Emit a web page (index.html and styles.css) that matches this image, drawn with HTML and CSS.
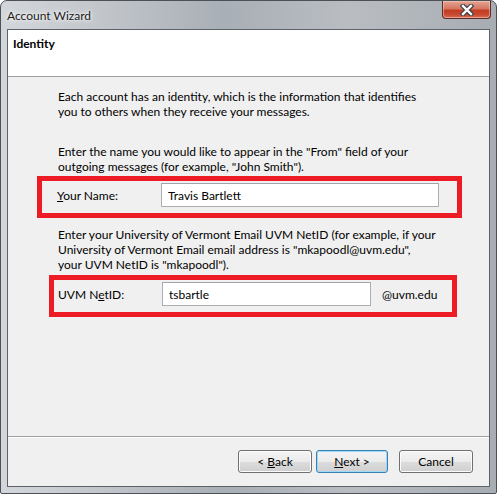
FILE: index.html
```html
<!DOCTYPE html>
<html lang="en">
<head>
    <meta charset="UTF-8">
    <title>Account Wizard</title>
    <link rel="stylesheet" href="styles.css">
</head>
<body>
    <div class="window">
        <div class="titlebar">
            <span class="title">Account Wizard</span>
            <div class="close-btn">
                <svg width="14" height="12" viewBox="0 0 14 12">
                    <path d="M3 2 L11 10 M11 2 L3 10" stroke="#3a3f48" stroke-width="4.6" stroke-linecap="square"/>
                    <path d="M3 2 L11 10 M11 2 L3 10" stroke="#ffffff" stroke-width="2.4" stroke-linecap="square"/>
                </svg>
            </div>
        </div>

        <div class="client">
            <div class="header">
                <h1>Identity</h1>
            </div>

            <div class="main">
                <p class="intro">Each account has an identity, which is the information that identifies<br>you to others when they receive your messages.</p>

                <p class="hint">Enter the name you would like to appear in the "From" field of your<br>outgoing messages (for example, "John Smith").</p>

                <div class="mark mark-name">
                    <label class="field-label"><u>Y</u>our Name:</label>
                    <input class="field-input name-input" type="text" value="Travis Bartlett">
                </div>

                <p class="hint netid-hint">Enter your University of Vermont Email UVM NetID (for example, if your<br>University of Vermont Email email address is "mkapoodl@uvm.edu",<br>your UVM NetID is "mkapoodl").</p>

                <div class="mark mark-netid">
                    <label class="field-label">UVM N<u>e</u>tID:</label>
                    <input class="field-input netid-input" type="text" value="tsbartle">
                    <span class="domain">@uvm.edu</span>
                </div>
            </div>

            <div class="footer">
                <button class="btn">&lt; <u>B</u>ack</button>
                <button class="btn btn-default"><u>N</u>ext &gt;</button>
                <button class="btn btn-cancel">Cancel</button>
            </div>
        </div>
    </div>
</body>
</html>
```

FILE: styles.css
```css
body {
    margin: 0;
    background: #ffffff;
    font-family: "Segoe UI", Lato, sans-serif;
    font-size: 12px;
    color: #000;
}

.window {
    width: 497px;
    height: 494px;
    box-sizing: border-box;
    border: 1px solid #4c5157;
    border-radius: 7px 7px 2px 2px;
    padding: 0 6px 6px 6px;
    background: linear-gradient(to right, #d3d6da 0%, #c2c6cb 20%, #a9afb6 45%, #b9bdc2 70%, #a7adb3 100%);
    display: flex;
    flex-direction: column;
}

.titlebar {
    height: 28px;
    display: flex;
    justify-content: space-between;
    align-items: flex-start;
    flex-shrink: 0;
}

.title {
    margin-top: 7px;
    color: #1b1b1b;
    text-shadow: 0 0 6px #ffffff, 0 0 3px #ffffff;
}

.close-btn {
    width: 47px;
    height: 17px;
    margin-right: -1px;
    border: 1px solid #5b2e27;
    border-top: none;
    border-radius: 0 0 4px 4px;
    background: linear-gradient(to bottom, #e3a594 0%, #d77763 45%, #c13c22 55%, #c84a30 80%, #d9715a 100%);
    box-shadow: inset 0 0 0 1px rgba(255, 220, 210, 0.45);
    display: flex;
    align-items: center;
    justify-content: center;
}

.client {
    flex: 1;
    border: 1px solid #5d6268;
    background: #f0f0f0;
    display: flex;
    flex-direction: column;
}

.header {
    height: 46px;
    background: #ffffff;
    border-bottom: 1px solid #a0a0a0;
    flex-shrink: 0;
}

.header h1 {
    margin: 6px 0 0 5px;
    font-size: 12px;
    font-weight: bold;
}

.main {
    flex: 1;
    padding: 12px 0 0 0;
}

.main p {
    margin: 0 0 0 50px;
    line-height: 15px;
    white-space: nowrap;
}

.intro {
    margin-bottom: 25px !important;
}

.mark {
    border: 5px solid #ed1c24;
    display: flex;
    align-items: center;
    box-sizing: border-box;
}

.mark-name {
    margin: 2px 0 0 29px;
    width: 425px;
    height: 42px;
    padding: 0 0 4px 15px;
}

.netid-hint {
    margin-top: 9px !important;
}

.mark-netid {
    margin: 3px 0 0 41px;
    width: 408px;
    height: 42px;
    padding: 0 0 4px 4px;
}

.field-label {
    width: 104px;
}

.field-input {
    height: 24px;
    box-sizing: border-box;
    border: 1px solid #abadb3;
    border-top-color: #a0a3a9;
    background: #ffffff;
    padding: 0 6px;
    font-family: inherit;
    font-size: 12px;
    color: #000;
}

.name-input {
    width: 278px;
}

.netid-input {
    width: 209px;
}

.domain {
    margin-left: 11px;
}

.footer {
    height: 50px;
    border-top: 1px solid #a0a0a0;
    box-shadow: inset 0 1px 0 #ffffff;
    display: flex;
    justify-content: flex-end;
    align-items: flex-start;
    padding: 13px 16px 0 0;
    box-sizing: border-box;
    flex-shrink: 0;
}

.btn {
    width: 74px;
    height: 23px;
    margin-left: 4px;
    border: 1px solid #707070;
    border-radius: 3px;
    background: linear-gradient(to bottom, #f4f4f4 0%, #ebebeb 50%, #dddddd 51%, #cfcfcf 100%);
    box-shadow: inset 0 0 0 1px #fcfcfc;
    font-family: inherit;
    font-size: 12px;
    color: #000;
    padding: 0;
}

.btn-default {
    width: 72px;
    border-color: #3c7fb1;
    box-shadow: inset 0 0 0 1px #9fd9f7;
}

.btn-cancel {
    margin-left: 11px;
}
```
